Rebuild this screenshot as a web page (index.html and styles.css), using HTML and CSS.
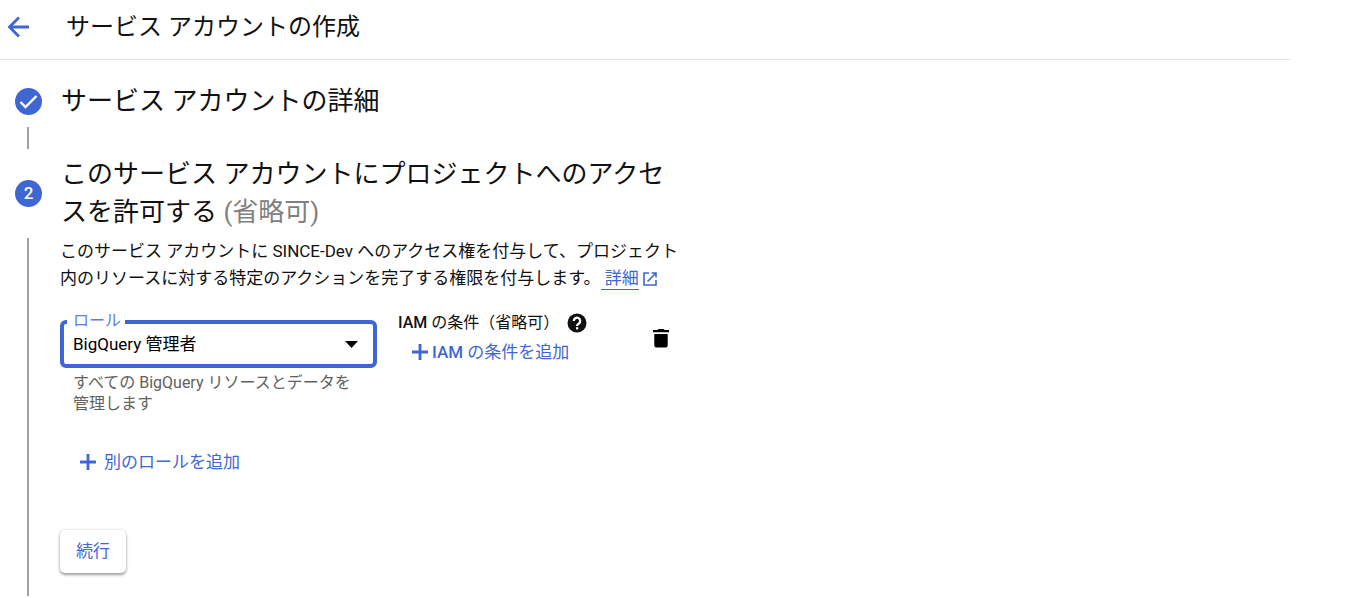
FILE: index.html
```html
<!DOCTYPE html>
<html lang="ja">
<head>
<meta charset="utf-8">
<meta name="viewport" content="width=device-width, initial-scale=1.0">
<title>サービス アカウントの作成</title>
<link rel="stylesheet" href="styles.css">
</head>
<body>
<header class="topbar">
	<a class="back" href="#" aria-label="戻る">
		<svg width="22" height="22" viewBox="0 0 22 22"><path d="M21 11H2M11 1.5L1.500 11l9.500 9.500" fill="none" stroke="currentColor" stroke-width="2.800"/></svg>
	</a>
	<h1>サービス アカウントの作成</h1>
</header>
<main class="stepper">
	<section class="step">
		<div class="step-head">
			<span class="badge">
				<svg width="27" height="27" viewBox="0 0 27 27"><path d="M5.500 14l5 5L21.500 8" fill="none" stroke="currentColor" stroke-width="2.400"/></svg>
			</span>
			<h2>サービス アカウントの詳細</h2>
		</div>
		<div class="step-body short"></div>
	</section>
	<section class="step">
		<div class="step-head">
			<span class="badge">2</span>
			<h2>このサービス アカウントにプロジェクトへのアクセスを許可する <span class="optional">(省略可)</span></h2>
		</div>
		<div class="step-body">
			<p class="desc">このサービス アカウントに SINCE-Dev へのアクセス権を付与して、プロジェクト内のリソースに対する特定のアクションを完了する権限を付与します。<a class="more" href="#"><span>&nbsp;詳細</span><svg width="14" height="14" viewBox="0 0 14 14"><path d="M6 1H1v12h12V8M8.500 1H13v4.500M13 1L4.500 9.500" fill="none" stroke="currentColor" stroke-width="1.600"/></svg></a></p>
			<form>
				<div class="role-row">
					<div class="role">
						<div class="field">
							<label for="role">ロール</label>
							<select id="role" aria-describedby="role-hint">
								<option>BigQuery 管理者</option>
							</select>
							<svg class="arrow" width="13" height="7" viewBox="0 0 13 7"><path d="M0 0h13L6.500 7z" fill="currentColor"/></svg>
						</div>
						<p class="hint" id="role-hint">すべての BigQuery リソースとデータを管理します</p>
					</div>
					<div class="condition">
						<div class="condition-title">
							<span><b>IAM</b> の条件（省略可）</span>
							<button type="button" class="help" aria-label="ヘルプ">
								<svg width="20" height="20" viewBox="0 0 20 20"><circle cx="10" cy="10" r="9.500" fill="currentColor"/><path d="M6.800 8a3.200 3.200 0 1 1 5.100 2.500C10.700 11.400 10 11.700 10 13" fill="none" stroke="#fff" stroke-width="2.200"/><path d="M9 14.200h2.200v2.200H9z" fill="#fff"/></svg>
							</button>
						</div>
						<button type="button" class="link-btn add-condition">
							<svg width="16" height="16" viewBox="0 0 16 16"><path d="M8 0v16M0 8h16" stroke="currentColor" stroke-width="2.800"/></svg>
							<span><b>IAM</b> の条件を追加</span>
						</button>
					</div>
					<button type="button" class="delete" aria-label="削除">
						<svg width="16" height="19" viewBox="0 0 16 19"><path d="M0 1h4.500l1-1h5l1 1H16v2.300H0zM1.300 5h13.400v11.500a2 2 0 0 1-2 2H3.300a2 2 0 0 1-2-2z" fill="currentColor"/></svg>
					</button>
				</div>
				<button type="button" class="link-btn add-role">
					<svg width="16" height="16" viewBox="0 0 16 16"><path d="M8 0v16M0 8h16" stroke="currentColor" stroke-width="2.800"/></svg>
					<span>別のロールを追加</span>
				</button>
				<button type="submit" class="continue">続行</button>
			</form>
		</div>
	</section>
</main>
</body>
</html>
```
FILE: styles.css
```css
*{box-sizing: border-box;}
body,h1,h2,p{margin: 0;padding: 0;}
body{min-height: 100vh;display: flex;flex-direction: column;background: #fff;color: #111;font: 17px/27px Roboto,"Noto Sans CJK JP",sans-serif;}
h1,h2{font-weight: normal;}
b{font-weight: 500;}
svg{display: block;flex: none;}
button{margin: 0;padding: 0;border: 0;background: none;color: inherit;font: inherit;cursor: pointer;}
a{color: #3f66d2;text-decoration: none;}

.topbar{display: flex;align-items: center;gap: 36px;height: 60px;margin-right: 58px;padding: 0 8px 6px;border-bottom: 1px solid #e0e0e0;}
.topbar h1{font-size: 24px;line-height: 36px;}

.stepper{flex: 1;display: flex;flex-direction: column;padding: 22px 0 2px 15px;}
.step{max-width: 680px;}
.step:last-child{flex: 1;display: flex;flex-direction: column;}
.step-head{display: flex;align-items: center;gap: 19px;}
.step-head h2{max-width: 616px;font-size: 26px;line-height: 38px;}
.optional{color: #808080;}
.badge{flex: none;display: flex;align-items: center;justify-content: center;width: 27px;height: 27px;border-radius: 50%;background: #3f66d2;color: #fff;font-weight: 500;}
.step-body{flex: 1;margin: 7px 0 0 12px;padding-left: 31px;border-left: 2px solid #a0a0a0;}
.step-body.short{height: 22px;margin-bottom: 6px;}

.desc{width: 624px;max-width: 100%;}
.more{display: inline-flex;align-items: center;gap: 4px;}
.more span{line-height: 22px;border-bottom: 1px solid #3f66d2;}

.role-row{display: flex;align-items: flex-start;margin-top: 28px;}
.role{width: 317px;}
.field{position: relative;}
.field label{position: absolute;top: -7px;left: 7px;padding: 0 4px 0 6px;background: #fff;color: #5c7fdc;font-size: 16px;line-height: 16px;}
.field select{display: block;width: 100%;height: 48px;padding: 0 40px 0 9px;border: 4px solid #3f66d2;border-radius: 6px;background: #fff;color: #000;font: inherit;appearance: none;outline: 0;}
.arrow{position: absolute;top: 21px;right: 19px;color: #000;pointer-events: none;}
.hint{padding: 4px 20px 0 13px;color: #616161;font-size: 16px;line-height: 21px;}
.condition{flex: 1;padding-left: 21px;}
.condition-title{display: flex;align-items: center;gap: 8px;height: 20px;margin-top: -7px;font-size: 16px;line-height: 20px;}
.link-btn{display: flex;align-items: center;color: #3f66d2;line-height: 24px;}
.add-condition{gap: 4px;margin: 7px 0 0 14px;}
.delete{margin: 9px 26px 0 0;color: #000;}
.add-role{gap: 8px;margin: 36px 0 0 20px;}
.continue{display: block;min-width: 66px;height: 43px;margin-top: 56px;padding: 0 16px;border-radius: 5px;background: #fff;box-shadow: 0 2px 3px rgba(0,0,0,.35),0 0 3px rgba(0,0,0,.15);color: #3f66d2;}
```
